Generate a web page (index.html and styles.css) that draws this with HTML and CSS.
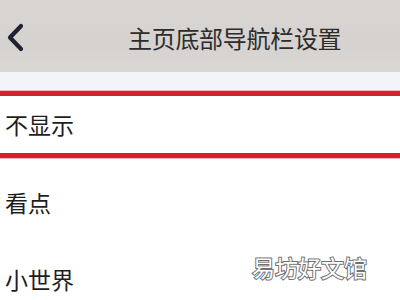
FILE: index.html
```html
<!DOCTYPE html>
<html lang="zh-CN">
<head>
<meta charset="utf-8">
<title>主页底部导航栏设置</title>
<link rel="stylesheet" href="styles.css">
</head>
<body>
<div class="page">
  <header class="topbar">
    <svg class="back" width="30" height="30" viewBox="0 0 30 30">
      <polyline points="19,3 8,14.5 19,26" fill="none" stroke="#1f2233" stroke-width="4.2" stroke-linecap="round" stroke-linejoin="round"/>
    </svg>
    <h1 class="title">主页底部导航栏设置</h1>
  </header>
  <div class="band"></div>
  <div class="row row-selected">不显示</div>
  <div class="row row-second">看点</div>
  <div class="row">小世界</div>
  <div class="watermark">易坊好文馆</div>
</div>
</body>
</html>
```

FILE: styles.css
```css
html, body {
  margin: 0;
  padding: 0;
  background: #ffffff;
}
.page {
  position: relative;
  width: 400px;
  height: 300px;
  overflow: hidden;
  font-family: "Noto Sans CJK SC", "Noto Sans", sans-serif;
  background: #ffffff;
}
.topbar {
  height: 72px;
  background: linear-gradient(180deg, #d9d5d2 0%, #d6d2cf 60%, #d9d6d3 100%);
  display: flex;
  align-items: center;
}
.back {
  margin-left: 2px;
  margin-top: 4px;
  flex: none;
}
.title {
  margin: 4px 0 0 96px;
  font-size: 24px;
  font-weight: 400;
  color: #2c2c2c;
  line-height: 24px;
  letter-spacing: -0.3px;
}
.band {
  height: 19px;
  background: #f3f4f9;
}
.row {
  height: 77px;
  display: flex;
  align-items: center;
  padding-left: 5px;
  font-size: 23px;
  line-height: 23px;
  color: #1e1e1e;
}
.row-selected {
  height: 57px;
  border-top: 5px solid #d81f2c;
  border-bottom: 5px solid #d81f2c;
  box-shadow: 0 -1px 0 #f2b9bc, 0 1px 0 #f2b9bc;
}
.row-second {
  margin-top: 6px;
}
.watermark {
  position: absolute;
  left: 252px;
  top: 256px;
  font-size: 23px;
  line-height: 23px;
  color: #ffffff;
  -webkit-text-stroke: 2px #707070;
  paint-order: stroke fill;
}
```
